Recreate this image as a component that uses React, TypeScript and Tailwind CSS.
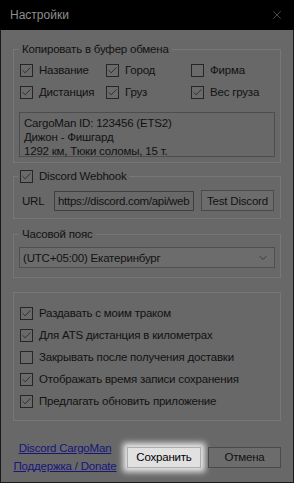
import { Check, ChevronDown, X } from "lucide-react";

const font = { fontFamily: '"Liberation Sans", Arial, sans-serif' };

function Box({ checked }: { checked: boolean }) {
  return (
    <span className="w-[13px] h-[13px] shrink-0 border border-[#262626] bg-[#6a6a6a] flex items-center justify-center">
      {checked && <Check className="w-[11px] h-[11px] text-[#1c1c1c]" strokeWidth={1.6} />}
    </span>
  );
}

function CheckItem({ label, checked }: { label: string; checked: boolean }) {
  return (
    <label className="flex items-center gap-[6px] h-[22px] whitespace-nowrap">
      <Box checked={checked} />
      <span>{label}</span>
    </label>
  );
}

const copyItems = [
  { label: "Название", checked: true },
  { label: "Город", checked: true },
  { label: "Фирма", checked: false },
  { label: "Дистанция", checked: true },
  { label: "Груз", checked: true },
  { label: "Вес груза", checked: true },
];

const options = [
  { label: "Раздавать с моим траком", checked: true },
  { label: "Для ATS дистанция в километрах", checked: true },
  { label: "Закрывать после получения доставки", checked: false },
  { label: "Отображать время записи сохранения", checked: true },
  { label: "Предлагать обновить приложение", checked: true },
];

export default function App() {
  return (
    <div className="w-[294px] h-[483px] bg-[#1a1a1a] flex flex-col text-[11.5px] tracking-[-0.2px] leading-[16px]" style={font}>
      {/* Title bar */}
      <div className="h-[30px] bg-black flex items-center justify-between pl-[10px] pr-[10px] shrink-0">
        <span className="text-[#8e8e8e] text-[12px] tracking-normal">Настройки</span>
        <X className="w-[14px] h-[14px] text-[#7e7e7e]" strokeWidth={1} />
      </div>

      {/* Body */}
      <div className="flex-1 mx-[1px] mb-[1px] bg-[#686868] text-[#121212] px-[12px] pt-[19px] flex flex-col">
        {/* Copy to clipboard */}
        <div className="relative border border-[#777777] h-[114px] pt-[9px]">
          <span className="absolute -top-[9px] left-[5px] px-[3px] bg-[#686868]">Копировать в буфер обмена</span>
          <div className="grid grid-cols-[86px_85px_1fr] pl-[6px]">
            {copyItems.map((it) => (
              <CheckItem key={it.label} label={it.label} checked={it.checked} />
            ))}
          </div>
          <div className="mt-[9px] mx-[5px] h-[45px] border border-[#4d4d4d] px-[4px] pt-[3px] leading-[14px]">
            <div>CargoMan ID: 123456 (ETS2)</div>
            <div>Дижон - Фишгард</div>
            <div>1292 км, Тюки соломы, 15 т.</div>
          </div>
        </div>

        {/* Discord webhook */}
        <div className="relative mt-[13px] border border-[#777777] h-[43px] pt-[13px] pl-[8px]">
          <span className="absolute -top-[9px] left-[4px] px-[2px] bg-[#686868] flex items-center gap-[6px] h-[16px]">
            <Box checked />
            <span>Discord Webhook</span>
          </span>
          <div className="flex items-center">
            <span className="w-[32px]">URL</span>
            <div className="w-[140px] h-[20px] border border-[#3f3f3f] pl-[3px] flex items-center overflow-hidden whitespace-nowrap">
              <span className="tracking-[-0.3px]">https://discord.com/api/web</span>
            </div>
            <button className="ml-[7px] w-[73px] h-[21px] border border-[#4a4a4a] bg-[#6c6c6c] whitespace-nowrap">
              Test Discord
            </button>
          </div>
        </div>

        {/* Timezone */}
        <div className="relative mt-[15px] border border-[#777777] h-[44px] pt-[12px] px-[5px]">
          <span className="absolute -top-[9px] left-[5px] px-[3px] bg-[#686868]">Часовой пояс</span>
          <div className="h-[21px] border border-[#4f4f4f] bg-[#6c6c6c] flex items-center justify-between pl-[3px] pr-[5px]">
            <span>(UTC+05:00) Екатеринбург</span>
            <ChevronDown className="w-[12px] h-[12px] text-[#2a2a2a]" strokeWidth={1.5} />
          </div>
        </div>

        {/* Options */}
        <div className="mt-[14px] border border-[#777777] h-[129px] pl-[6px] pt-[9px] flex flex-col">
          {options.map((it) => (
            <CheckItem key={it.label} label={it.label} checked={it.checked} />
          ))}
        </div>

        {/* Footer */}
        <div className="flex items-center mt-[18px]">
          <div className="w-[110px] -ml-[3px] flex flex-col items-center leading-[18px] text-[#16167c] underline whitespace-nowrap">
            <span>Discord CargoMan</span>
            <span>Поддержка / Donate</span>
          </div>
          <button className="ml-[7px] w-[74px] h-[21px] border border-[#adadad] bg-[#e1e1e1] text-black shadow-[0_0_6px_4px_rgba(255,255,255,0.85)]">
            Сохранить
          </button>
          <button className="ml-[7px] w-[73px] h-[21px] border border-[#4a4a4a] bg-[#6c6c6c]">Отмена</button>
        </div>
      </div>
    </div>
  );
}
